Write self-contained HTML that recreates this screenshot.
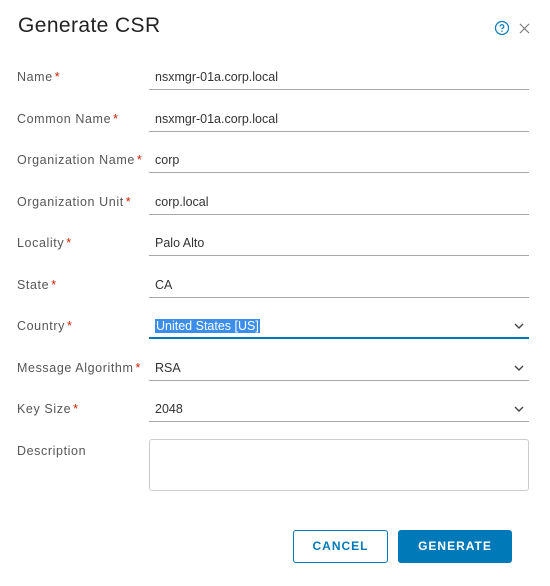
<!DOCTYPE html>
<html><head><style>
*{margin:0;padding:0;box-sizing:border-box}
body{width:550px;height:586px;background:#fff;font-family:"Liberation Sans",sans-serif;position:relative;overflow:hidden;color:#333}
.t{position:absolute;left:18px;top:14px;font-size:21px;color:#222;letter-spacing:0.4px}
.l{position:absolute;left:17px;font-size:12.5px;color:#565656;letter-spacing:0.6px}
.l b{color:#c92100;font-weight:normal;margin-left:2px}
.f{position:absolute;left:149px;width:380px;height:22px;border-bottom:1px solid #a8a8a8;font-size:12.5px;color:#333;padding-left:6px;line-height:18px}
.f.a{border-bottom:2px solid #0079b8}
.sel{background:#3b8eea;color:#fff;padding:0 1px}
.ch{position:absolute;right:5px;top:5px}
.d{position:absolute;left:149px;top:439px;width:380px;height:52px;border:1px solid #ccc;border-radius:3px}
.btn{position:absolute;top:530px;height:33px;border-radius:3px;font-size:12px;font-weight:bold;letter-spacing:1px;text-align:center;line-height:31px}
</style></head><body>
<div class="t">Generate CSR</div>
<svg style="position:absolute;left:494px;top:20px" width="16" height="16" viewBox="0 0 16 16"><circle cx="8" cy="8" r="6.5" fill="none" stroke="#0079b8" stroke-width="1.2"/><path d="M6.2 6.5a1.8 1.8 0 1 1 2.4 1.7c-.4.2-.6.5-.6 1" fill="none" stroke="#0079b8" stroke-width="1.2"/><circle cx="8" cy="11.2" r=".7" fill="#0079b8"/></svg>
<svg style="position:absolute;left:519px;top:23px" width="11" height="11" viewBox="0 0 12 12"><path d="M1 1L11 11M11 1L1 11" stroke="#777" stroke-width="1.2"/></svg>

<div class="l" style="top:70px">Name<b>*</b></div><div class="f" style="top:68px">nsxmgr-01a.corp.local</div>
<div class="l" style="top:112px">Common Name<b>*</b></div><div class="f" style="top:110px">nsxmgr-01a.corp.local</div>
<div class="l" style="top:153px">Organization Name<b>*</b></div><div class="f" style="top:151px">corp</div>
<div class="l" style="top:195px">Organization Unit<b>*</b></div><div class="f" style="top:193px">corp.local</div>
<div class="l" style="top:236px">Locality<b>*</b></div><div class="f" style="top:234px">Palo Alto</div>
<div class="l" style="top:278px">State<b>*</b></div><div class="f" style="top:276px">CA</div>
<div class="l" style="top:319px">Country<b>*</b></div><div class="f a" style="top:317px"><span class="sel">United States [US]</span><svg class="ch" width="10" height="8" viewBox="0 0 10 8"><path d="M1 2l4 4 4-4" fill="none" stroke="#444" stroke-width="1.4"/></svg></div>
<div class="l" style="top:361px">Message Algorithm<b>*</b></div><div class="f" style="top:359px">RSA<svg class="ch" width="10" height="8" viewBox="0 0 10 8"><path d="M1 2l4 4 4-4" fill="none" stroke="#444" stroke-width="1.4"/></svg></div>
<div class="l" style="top:402px">Key Size<b>*</b></div><div class="f" style="top:400px">2048<svg class="ch" width="10" height="8" viewBox="0 0 10 8"><path d="M1 2l4 4 4-4" fill="none" stroke="#444" stroke-width="1.4"/></svg></div>
<div class="l" style="top:444px">Description</div>
<div class="d"></div>
<div class="btn" style="left:293px;width:95px;border:1px solid #0079b8;color:#0079b8">CANCEL</div>
<div class="btn" style="left:398px;width:114px;background:#0079b8;color:#fff;border:1px solid #0079b8">GENERATE</div>
</body></html>
